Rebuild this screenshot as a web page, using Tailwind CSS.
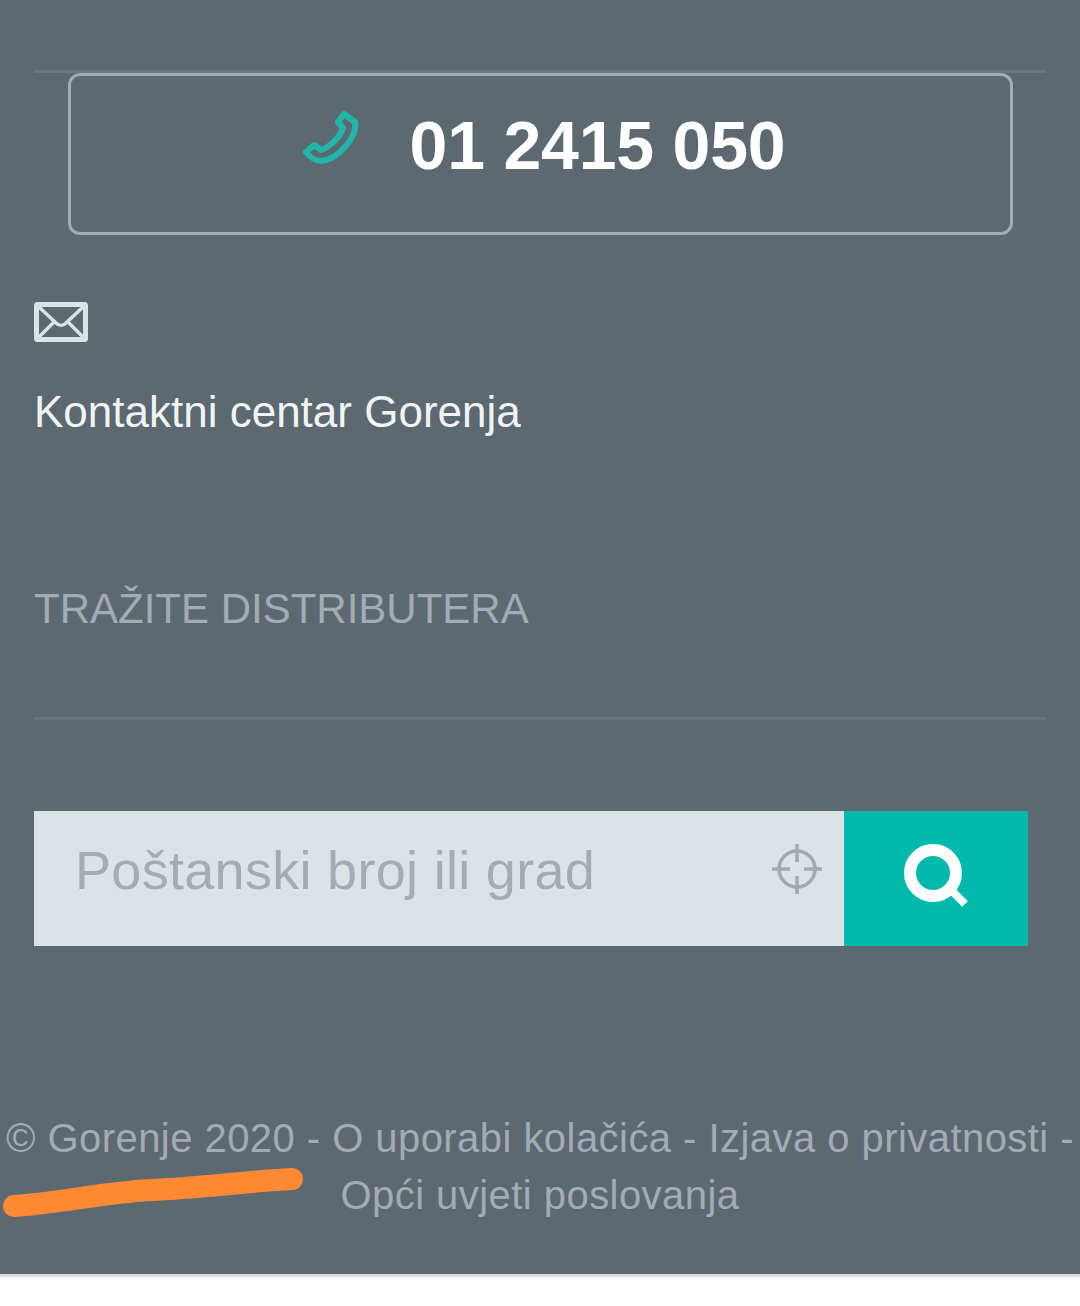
<!DOCTYPE html>
<html lang="en">
<head>
    <meta charset="UTF-8">
    <meta name="viewport" content="width=device-width, initial-scale=1.0">
    <title>Gorenje kontakt</title>
    <script src="https://cdn.jsdelivr.net/npm/@tailwindcss/browser@4"></script>
</head>
<body class="bg-white font-['Liberation_Sans',Arial,sans-serif]">

    <footer class="relative h-[1277px] bg-[#5c6970] border-b-[3px] border-[#d9dbe0] pt-[70px] overflow-hidden">

        <div class="mx-[34px] h-[3px] bg-[#6b777e]"></div>

        <a href="#" class="ml-[68px] mr-[67px] h-[162px] border-[3px] border-[#a3acb5] rounded-xl flex items-center justify-center gap-[50px] pl-[6px]">
            <svg class="w-[58px] h-[58px] -mt-[30px]" viewBox="0 0 58 58" fill="none" stroke="#22b5ac" stroke-width="6" stroke-linejoin="round">
                <path d="M42 4 L53 12 C56 26 36 50 19 51 C14 51 8 47 4 42 L12 35 L19 40 C28 37 38 27 41 18 L36 12 Z"/>
            </svg>
            <span class="text-[68px] leading-none font-bold text-white -mt-[18px] tracking-[-0.2px]">01 2415 050</span>
        </a>

        <div class="px-[34px] pt-[67px]">
            <svg class="w-[54px] h-[40px]" viewBox="0 0 54 40" fill="none" stroke="#dce3e7">
                <rect x="2.5" y="2.5" width="49" height="35" rx="1" stroke-width="5"/>
                <path d="M5 5 L22 21 C25 24 29 24 32 21 L49 5 M5 35 L20 20 M49 35 L34 20" stroke-width="3.5"/>
            </svg>
            <p class="mt-[45px] text-[44px] leading-[50px] text-[#f1f4f5]">Kontaktni centar Gorenja</p>
            <h3 class="mt-[147px] text-[42px] leading-[50px] text-[#a3acb5]">TRAŽITE DISTRIBUTERA</h3>
        </div>

        <div class="mx-[34px] mt-[83px] h-[3px] bg-[#6b777e]"></div>

        <form class="mt-[91px] ml-[34px] w-[994px] h-[135px] flex">
            <div class="w-[810px] bg-[#dce3e7] flex items-center justify-between pl-[41px] pr-[22px] pb-[16px]">
                <span class="text-[54px] text-[#a3acb5] tracking-[0.3px]">Poštanski broj ili grad</span>
                <svg class="w-[50px] h-[50px] -mt-[4px]" viewBox="0 0 50 50" fill="none" stroke="#a3a8ae" stroke-width="3.5">
                    <circle cx="25" cy="25" r="18"/>
                    <path d="M25 0 V18 M25 32 V50 M0 25 H18 M32 25 H50"/>
                </svg>
            </div>
            <button type="button" class="w-[184px] bg-[#00b9ad] flex items-center justify-center">
                <svg class="w-[72px] h-[72px] -mt-[5px]" viewBox="0 0 72 72" fill="none" stroke="#fff">
                    <circle cx="33" cy="33" r="23" stroke-width="12"/>
                    <path d="M53 52 L65 64" stroke-width="8"/>
                </svg>
            </button>
        </form>

        <p class="mt-[164px] text-center text-[40px] leading-[57px] text-[#a3acb5] tracking-[0.45px] whitespace-nowrap">© Gorenje 2020 - O uporabi kolačića - Izjava o privatnosti -<br>Opći uvjeti poslovanja</p>

        <svg class="absolute left-0 top-[1160px] w-[310px] h-[64px]" viewBox="0 0 310 64" fill="none">
            <path d="M14 46 C60 43 100 33 150 30 C200 28 250 21 292 19" stroke="#ff8a33" stroke-width="22" stroke-linecap="round"/>
        </svg>
    </footer>

</body>
</html>
